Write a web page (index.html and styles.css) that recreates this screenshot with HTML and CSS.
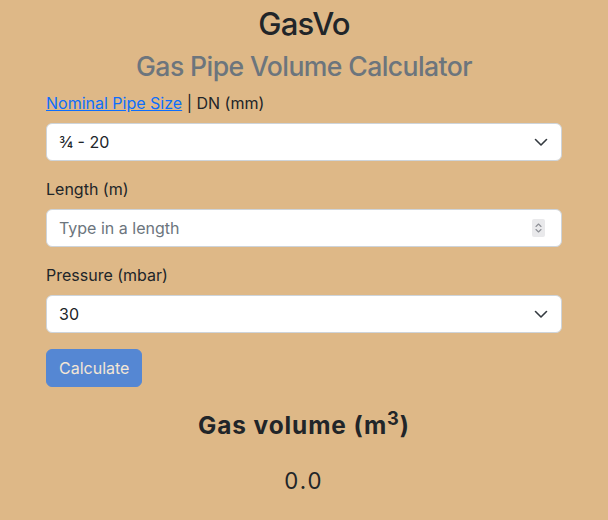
FILE: index.html
```html
<!DOCTYPE html>
<html lang="en">
<head>
<meta charset="utf-8">
<title>GasVo</title>
<link rel="stylesheet" href="styles.css">
</head>
<body>
<main class="container">
  <h1 class="title">GasVo</h1>
  <h2 class="subtitle">Gas Pipe Volume Calculator</h2>
  <form class="calc">
    <div class="field">
      <label class="label" for="size"><a href="#" class="link">Nominal Pipe Size</a> | DN (mm)</label>
      <div class="select-wrap">
        <select id="size" class="control select">
          <option>¾ - 20</option>
        </select>
        <svg class="chevron" width="16" height="16" viewBox="0 0 16 16" aria-hidden="true"><path d="M2.5 5.5l5.5 5.5 5.5-5.5" fill="none" stroke="#343a40" stroke-width="1.6" stroke-linecap="round" stroke-linejoin="round"/></svg>
      </div>
    </div>
    <div class="field">
      <label class="label" for="len">Length (m)</label>
      <div class="select-wrap">
        <input id="len" class="control number" type="number" placeholder="Type in a length">
        <span class="stepper" aria-hidden="true">
          <svg width="13" height="18" viewBox="0 0 13 18"><path d="M4 7.5l2.5-2.5 2.5 2.5M4 10.5l2.5 2.5 2.5-2.5" fill="none" stroke="#8e9096" stroke-width="1.1" stroke-linecap="round" stroke-linejoin="round"/></svg>
        </span>
      </div>
    </div>
    <div class="field">
      <label class="label" for="pres">Pressure (mbar)</label>
      <div class="select-wrap">
        <select id="pres" class="control select">
          <option>30</option>
        </select>
        <svg class="chevron" width="16" height="16" viewBox="0 0 16 16" aria-hidden="true"><path d="M2.5 5.5l5.5 5.5 5.5-5.5" fill="none" stroke="#343a40" stroke-width="1.6" stroke-linecap="round" stroke-linejoin="round"/></svg>
      </div>
    </div>
    <button type="button" class="btn" disabled>Calculate</button>
  </form>
  <h3 class="result-title">Gas volume (m<sup>3</sup>)</h3>
  <h4 class="result-value">0.0</h4>
</main>
</body>
</html>
```
FILE: styles.css
```css
* { box-sizing: border-box; }
html, body { margin: 0; padding: 0; }
body {
  background: #deb887;
  color: #212529;
  font-family: Inter, "Liberation Sans", sans-serif;
  font-size: 16px;
  line-height: 1.5;
}
.container {
  width: 540px;
  margin: 0 auto;
  padding: 6px 12px 0;
}
.title {
  margin: 0 0 8px;
  font-size: 31.1px;
  font-weight: 500;
  line-height: 1.2;
  letter-spacing: -0.8px;
  text-align: center;
}
.subtitle {
  margin: 0 0 8px;
  font-size: 26.6px;
  font-weight: 500;
  line-height: 1.2;
  letter-spacing: -0.6px;
  text-align: center;
  color: #6c757d;
}
.calc { display: flex; flex-direction: column; align-items: flex-start; }
.field { width: 100%; margin-bottom: 16px; }
.label { display: inline-block; margin-bottom: 8px; }
.link { color: #0d6efd; text-decoration: underline; }
.select-wrap { position: relative; }
.control {
  display: block;
  width: 100%;
  height: 38px;
  padding: 6px 36px 6px 12px;
  font: inherit;
  font-size: 16px;
  line-height: 24px;
  color: #212529;
  background: #fff;
  border: 1px solid #ced4da;
  border-radius: 6px;
  appearance: none;
  -webkit-appearance: none;
  -moz-appearance: textfield;
}
.number::placeholder { color: #6c757d; opacity: 1; }
.number::-webkit-inner-spin-button,
.number::-webkit-outer-spin-button { -webkit-appearance: none; margin: 0; }
.chevron { position: absolute; right: 13px; top: 11px; pointer-events: none; }
.stepper {
  position: absolute;
  right: 17px;
  top: 10px;
  width: 13px;
  height: 18px;
  background: #e9e9eb;
  border-radius: 2px;
  display: flex;
  pointer-events: none;
}
.btn {
  font: inherit;
  font-size: 16px;
  line-height: 24px;
  padding: 6px 12px;
  color: #fff;
  background: #0d6efd;
  border: 1px solid #0d6efd;
  border-radius: 6px;
}
.btn:disabled { opacity: .65; }
.result-title {
  margin: 24px 0 8px;
  font-size: 24.4px;
  font-weight: 700;
  line-height: 1.2;
  letter-spacing: 0.9px;
  text-align: center;
}
.result-title sup {
  position: relative;
  font-size: .75em;
  line-height: 0;
  vertical-align: baseline;
  top: -.5em;
}
.result-value {
  margin: 27px 0 0;
  font-size: 22.2px;
  font-weight: 400;
  line-height: 1.2;
  letter-spacing: 2px;
  text-align: center;
}
```
